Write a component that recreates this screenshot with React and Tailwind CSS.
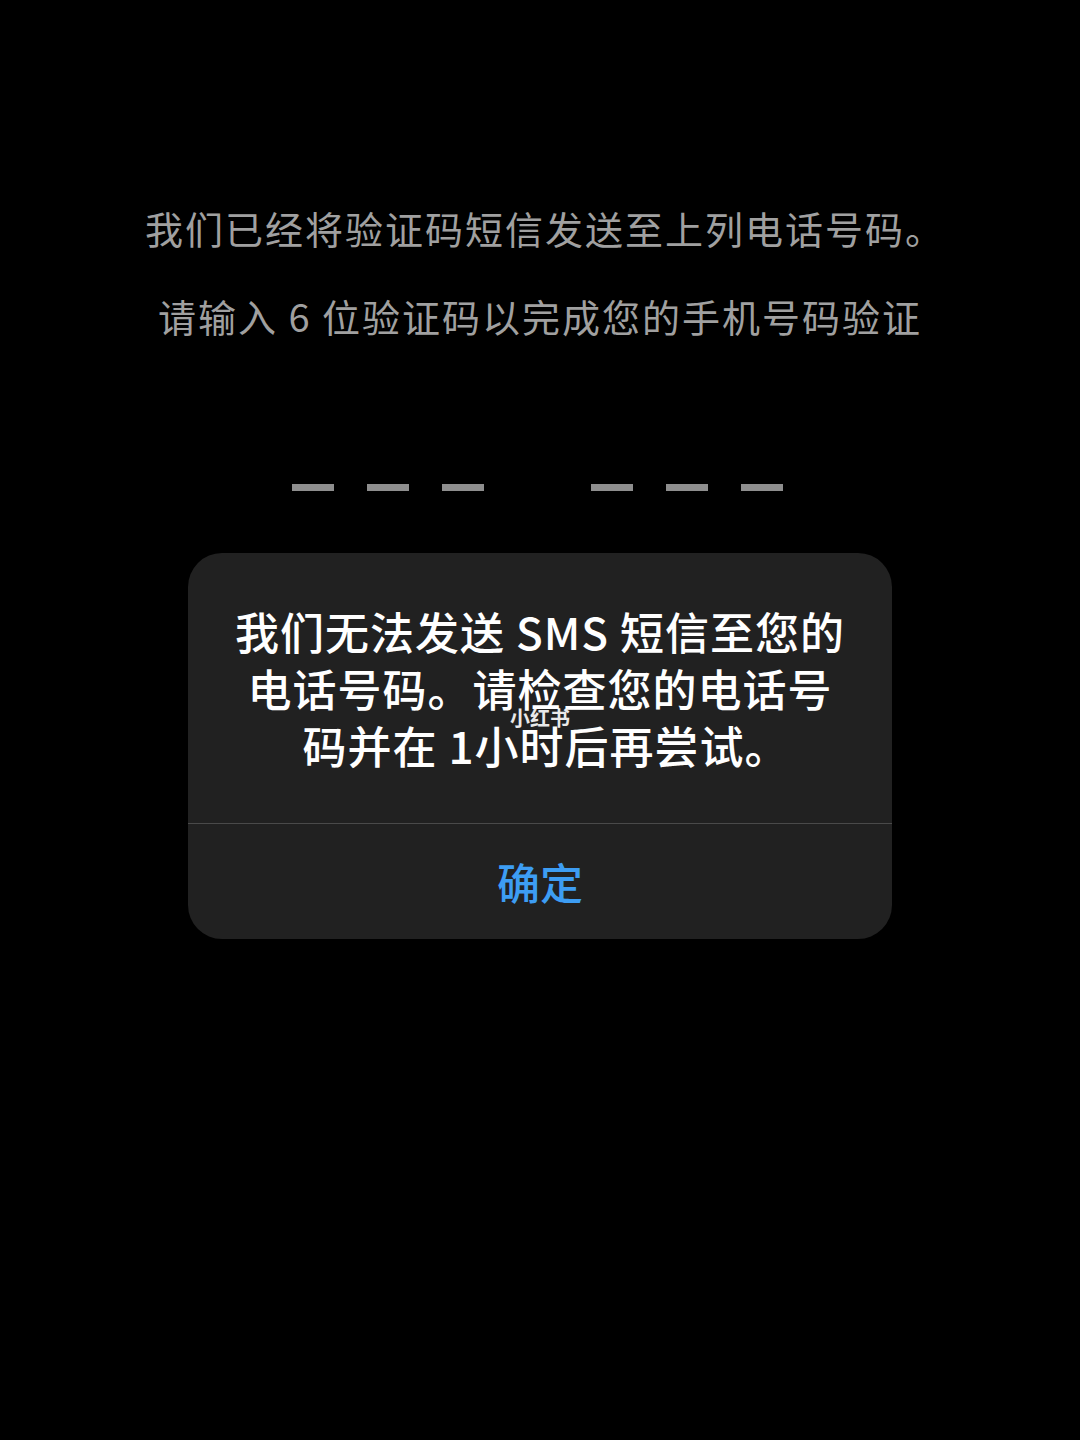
import React from 'react';

const font = { fontFamily: '"Noto Sans CJK SC", "Noto Sans", sans-serif' };

const Dash = () => <div className="w-[42px] h-[7px] bg-[#8e8e8e]" />;

const App = () => {
  const lines = ['我们无法发送 SMS 短信至您的', '电话号码。请检查您的电话号', '码并在 1小时后再尝试。'];

  return (
    <div className="w-full h-[1440px] bg-black flex flex-col items-center pt-[204px]" style={font}>
      {/* Instructions */}
      <p className="pl-[10px] text-[38px] leading-[48px] text-[#a0a0a0] tracking-[2px]">
        我们已经将验证码短信发送至上列电话号码。
      </p>
      <p className="mt-[40px] text-[38px] leading-[48px] text-[#a0a0a0] tracking-[2px]">
        请输入 6 位验证码以完成您的手机号码验证
      </p>

      {/* Code slots */}
      <div className="mt-[144px] pr-[6px] flex items-center gap-[107px]">
        <div className="flex gap-[33px]">
          <Dash />
          <Dash />
          <Dash />
        </div>
        <div className="flex gap-[33px]">
          <Dash />
          <Dash />
          <Dash />
        </div>
      </div>

      {/* Alert */}
      <div className="relative mt-[62px] w-[704px] bg-[#212121] rounded-[34px] overflow-hidden">
        <div className="pt-[50px] pb-[49px] flex flex-col items-center">
          {lines.map((line, i) => (
            <span
              key={line}
              className={`text-[44px] leading-[57px] font-medium tracking-[1px] text-white whitespace-nowrap ${i === 2 ? 'pl-[12px]' : ''}`}
            >
              {line}
            </span>
          ))}
        </div>
        <div className="h-px bg-[#4a4a4a]" />
        <button className="w-full h-[115px] flex items-center justify-center text-[43px] font-medium text-[#3d9df3]">
          确定
        </button>
        <span className="absolute left-[322px] top-[154px] text-[20px] leading-[22px] font-bold text-white opacity-90">
          小红书
        </span>
      </div>
    </div>
  );
};

export default App;
